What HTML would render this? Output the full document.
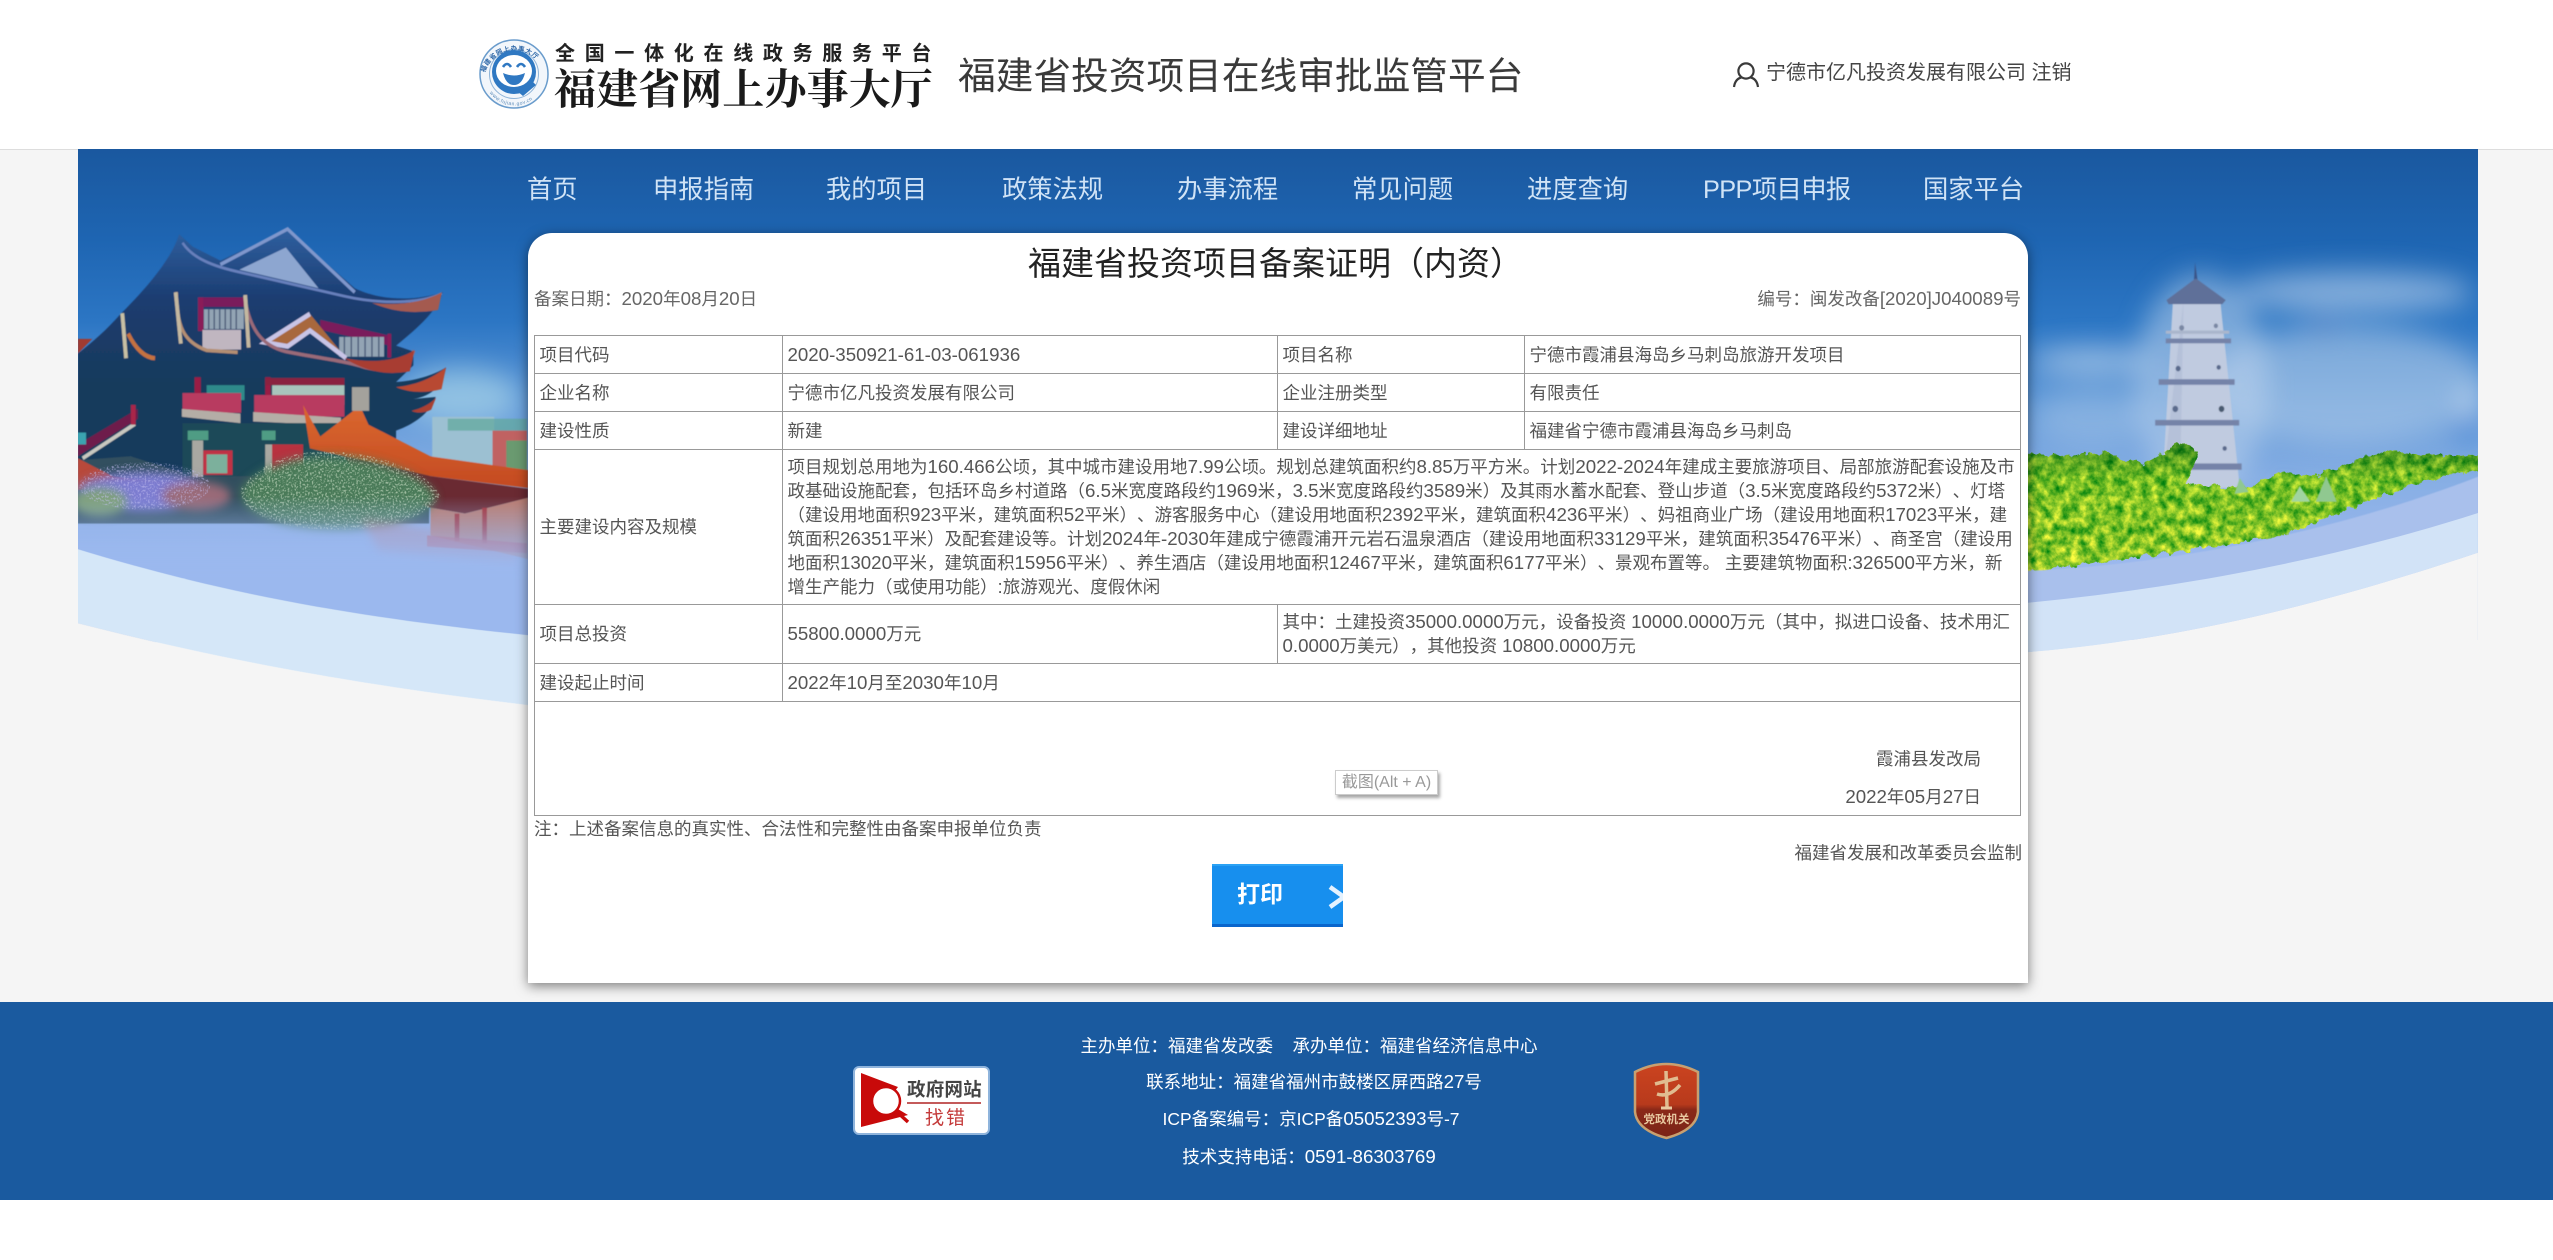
<!DOCTYPE html>
<html lang="zh-CN"><head><meta charset="utf-8"><title>福建省投资项目在线审批监管平台</title>
<style>
html,body{margin:0;padding:0;background:#fff}
body{position:relative;width:2553px;height:1260px;overflow:hidden;font-family:"Liberation Sans","Noto Sans CJK SC",sans-serif;color:#555;font-size:17.5px;text-spacing-trim:space-all}
.t{position:absolute;white-space:nowrap}
i{font-style:normal;font-size:18.7px}
#head{position:absolute;left:0;top:0;width:2553px;height:149px;background:#fff;border-bottom:1px solid #ddd}
#main{position:absolute;left:0;top:150px;width:2553px;height:852px;background:#f5f5f5}
#art{position:absolute;left:0;top:0}
.n{font-size:25.3px;line-height:36px;top:172px;color:#d0e3f6}
#card{position:absolute;left:528px;top:233px;width:1500px;height:750px;background:#fff;border-radius:24px 24px 0 0;box-shadow:0 3px 12px rgba(0,0,0,.5)}
table{position:absolute;left:534px;top:335px;width:1486px;height:481px;table-layout:fixed;border-collapse:collapse;color:#555;font-size:17.5px;line-height:24px}
td{border:1px solid #999;padding:0 4.5px;vertical-align:middle;white-space:nowrap}
#foot{position:absolute;left:0;top:1002px;width:2553px;height:198px;background:#1a5a9f}
.f{color:#fff;font-size:17.5px;line-height:30px;text-align:center;left:909px;width:800px}
#btn{position:absolute;left:1212px;top:864px;width:131px;height:63px;background:#178fee;border-top:2px solid #2ba2f4;border-bottom:3px solid #0a66cc;box-sizing:border-box;overflow:hidden;color:#fff;font-weight:bold;font-size:23px}
#tip{position:absolute;left:1335px;top:770px;width:103px;height:25px;box-sizing:border-box;background:#fff;border:1px solid #ccc;box-shadow:2px 3px 3px rgba(0,0,0,.35);color:#999;font-size:16px;line-height:23px;text-align:center;white-space:nowrap}
</style></head><body>
<div id="head"></div>
<div id="main"></div>
<svg id="art" width="2553" height="1260" viewBox="0 0 2553 1260" xmlns="http://www.w3.org/2000/svg">
<defs>
<linearGradient id="sky" x1="0" y1="149" x2="0" y2="560" gradientUnits="userSpaceOnUse">
<stop offset="0" stop-color="#1a589f"/><stop offset=".22" stop-color="#1e65b2"/><stop offset=".42" stop-color="#2c76c4"/><stop offset=".62" stop-color="#5f98d8"/><stop offset=".8" stop-color="#86aee4"/><stop offset="1" stop-color="#9bb8ee"/>
</linearGradient>
<linearGradient id="mass" x1="0" y1="230" x2="0" y2="620" gradientUnits="userSpaceOnUse">
<stop offset="0" stop-color="#2f5f9f"/><stop offset=".45" stop-color="#1b3c70"/><stop offset="1" stop-color="#193a5c"/>
</linearGradient>
<linearGradient id="fade" x1="0" y1="900" x2="0" y2="1110" gradientUnits="userSpaceOnUse">
<stop offset="0" stop-color="#9bb8ee" stop-opacity="0"/><stop offset=".5" stop-color="#9bb8ee" stop-opacity=".6"/><stop offset="1" stop-color="#9bb8ee"/>
</linearGradient>
<linearGradient id="tree" x1="0" y1="780" x2="0" y2="1060" gradientUnits="userSpaceOnUse">
<stop offset="0" stop-color="#86c0a0"/><stop offset=".28" stop-color="#dcf6c0"/><stop offset="1" stop-color="#ffffd0"/>
</linearGradient>
<linearGradient id="rf" x1="0" y1="690" x2="0" y2="880" gradientUnits="userSpaceOnUse">
<stop offset="0" stop-color="#d8652e"/><stop offset="1" stop-color="#c44a22"/>
</linearGradient>
<linearGradient id="sh" x1="0" y1="1062" x2="0" y2="1139" gradientUnits="userSpaceOnUse">
<stop offset="0" stop-color="#cc4420"/><stop offset=".55" stop-color="#b83a1c"/><stop offset=".62" stop-color="#8a2818"/><stop offset="1" stop-color="#7a2418"/>
</linearGradient>
<filter id="b12" x="-60%" y="-60%" width="220%" height="220%"><feGaussianBlur stdDeviation="36"/></filter>
<filter id="b8" x="-20%" y="-20%" width="140%" height="140%"><feGaussianBlur stdDeviation="12"/></filter>
<filter id="b1"><feGaussianBlur stdDeviation="1.4"/></filter>
<filter id="leaf" x="-5%" y="-5%" width="110%" height="110%" color-interpolation-filters="sRGB">
<feTurbulence type="fractalNoise" baseFrequency=".04" numOctaves="4" seed="7" result="n"/>
<feDisplacementMap in="SourceGraphic" in2="n" scale="26" xChannelSelector="R" yChannelSelector="G" result="d"/>
<feColorMatrix in="n" type="matrix" values="1.5 0 0 0 -.22  .7 0 0 0 .42  .35 0 0 0 .02  0 0 0 0 1" result="c"/>
<feBlend in="c" in2="d" mode="multiply" result="m"/>
<feComposite in="m" in2="d" operator="in"/>
</filter>
<filter id="spk" x="-5%" y="-5%" width="110%" height="110%" color-interpolation-filters="sRGB">
<feTurbulence type="fractalNoise" baseFrequency=".2" numOctaves="2" seed="11" result="n"/>
<feColorMatrix in="n" type="matrix" values="0 0 0 0 1  0 0 0 0 1  0 0 0 0 1  6 0 0 0 -3.1" result="k"/>
<feComposite in="SourceGraphic" in2="k" operator="in"/>
</filter>
<clipPath id="heroL"><rect x="226" y="0" width="1320" height="1568"/></clipPath>
<clipPath id="heroR"><rect x="60" y="0" width="1295" height="1568"/></clipPath>
<path id="ringT" d="M484,76 A31,31 0 0 1 545,76"/>
<path id="ringB" d="M489,92 A31,31 0 0 0 540,92"/>
</defs>

<!-- hero sky -->
<rect x="78" y="149" width="2400" height="420" fill="url(#sky)"/>
<rect x="78" y="560" width="2400" height="80" fill="#9bb8ee"/>

<!-- LEFT SCENE -->
<g transform="translate(0,140) scale(.3444,.3954)" clip-path="url(#heroL)">
 <g filter="url(#b12)"><ellipse cx="1340" cy="650" rx="170" ry="70" fill="#a8d4e8" opacity=".7"/></g>
 <g filter="url(#b1)">
 <!-- distant building -->
 <rect x="1255" y="700" width="180" height="130" fill="#9cc0d2"/>
 <rect x="1300" y="705" width="230" height="30" fill="#5fa89a" opacity=".7"/>
 <rect x="1430" y="735" width="100" height="100" fill="#c06262"/>
 <rect x="1470" y="760" width="60" height="80" fill="#6a9a70"/>
 <!-- main silhouette -->
 <rect x="226" y="800" width="1020" height="170" fill="#33505e"/>
 <path d="M520,238 L560,270 L640,305 L835,225 L1030,375 C1100,405 1200,410 1285,385 C1270,430 1220,470 1150,520 L1200,535 L1200,570 L1150,612 C1200,610 1260,595 1295,575 C1285,630 1240,650 1200,655 L1265,650 C1250,690 1200,720 1150,735 L1150,850 L560,850 L380,800 L226,810 L226,540 C270,510 310,480 350,440 C420,380 500,300 520,238Z" fill="url(#mass)"/>
 <!-- gable -->
 <path d="M640,315 L835,225 L1030,385" fill="none" stroke="#7f97cc" stroke-width="9"/>
 <path d="M830,272 L695,328 L925,375Z" fill="#8da6d0"/>
 <path d="M530,260 C560,300 620,320 700,335 L1000,395 C1100,415 1220,415 1283,388" fill="none" stroke="#6880bc" stroke-width="7"/>
 <path d="M1080,412 C1160,420 1230,410 1283,385 L1272,430 C1200,440 1140,435 1080,412Z" fill="#a45a50"/>
 <!-- second level -->
 <rect x="575" y="398" width="16" height="85" fill="#8a1a58"/>
 <rect x="590" y="398" width="125" height="24" fill="#7a1c5c"/>
 <rect x="592" y="428" width="116" height="50" fill="#93a4b4"/>
 <path d="M606,428v50M622,428v50M638,428v50M654,428v50M670,428v50M686,428v50" stroke="#4a5a78" stroke-width="4"/>
 <rect x="588" y="480" width="112" height="50" fill="#c0b6c0"/>
 <path d="M930,455 L1132,495 L1132,520 L930,480Z" fill="#7a1c5c"/>
 <rect x="985" y="498" width="130" height="50" fill="#93a4b4"/>
 <path d="M1000,498v50M1020,498v50M1040,498v50M1060,498v50M1080,498v50M1100,498v50" stroke="#4a5a78" stroke-width="4"/>
 <rect x="1125" y="490" width="11" height="60" fill="#8a1a58"/>
 <path d="M900,440 L770,512 L835,522 L900,482 L1005,552" fill="#a8683c" stroke="#c8c4e6" stroke-width="12"/>
 <path d="M512,385 C515,470 530,510 600,532 L690,537" fill="none" stroke="#b48e72" stroke-width="9"/>
 <path d="M710,395 C725,480 760,520 830,535 C900,548 1000,558 1060,575 C1130,590 1190,570 1202,532" fill="none" stroke="#9a6a78" stroke-width="9"/>
 <path d="M1000,552 C1080,565 1150,560 1203,532 L1190,585 C1120,596 1060,585 1000,552Z" fill="#a83c30"/>
 <path d="M510,385 L525,515 M712,392 L722,525" stroke="#c4b8a0" stroke-width="11" fill="none"/>
 <path d="M355,438 L366,552" stroke="#c8c0a4" stroke-width="11"/>
 <path d="M372,490 C395,530 420,550 450,552" fill="none" stroke="#c47240" stroke-width="11"/>
 <path d="M1150,625 C1210,620 1260,600 1295,575 L1282,630 C1240,640 1190,640 1150,625Z" fill="#b84a30"/>
 <path d="M1195,685 C1220,680 1250,668 1266,652 L1252,682 C1235,690 1210,692 1195,685Z" fill="#a84030"/>
 <path d="M226,503 L268,503 L226,540Z" fill="#a03a30"/>
 <!-- balcony -->
 <rect x="565" y="600" width="18" height="42" fill="#9a1a44"/>
 <rect x="770" y="600" width="16" height="48" fill="#9a1a44"/>
 <rect x="600" y="620" width="110" height="38" fill="#2d8a8a"/>
 <rect x="790" y="620" width="210" height="50" fill="#a8c4bc"/>
 <rect x="770" y="602" width="230" height="18" fill="#8a2040"/>
 <rect x="530" y="640" width="170" height="50" fill="#b83a60"/>
 <rect x="738" y="645" width="262" height="55" fill="#b83a60"/>
 <path d="M528,680 L698,692 L698,716 L528,700Z" fill="#b4ada6"/>
 <path d="M735,688 L990,702 L990,722 L735,712Z" fill="#b4ada6"/>
 <!-- lower -->
 <rect x="530" y="716" width="510" height="134" fill="#1d4858"/>
 <rect x="558" y="760" width="32" height="92" fill="#a8a8a2"/>
 <rect x="770" y="770" width="22" height="82" fill="#a8a8a2"/>
 <rect x="590" y="785" width="85" height="62" fill="#c03244"/>
 <rect x="600" y="795" width="60" height="48" fill="#7cb09c"/>
 <rect x="790" y="770" width="90" height="75" fill="#b83040"/>
 <rect x="545" y="735" width="60" height="24" fill="#4f9c84"/>
 <rect x="760" y="735" width="40" height="24" fill="#4f9c84"/>
 <path d="M226,770 L400,680 L400,705 L226,800Z" fill="#6e1a4c"/>
 <path d="M240,805 L392,718" stroke="#c8c8c0" stroke-width="10"/>
 <rect x="380" y="670" width="14" height="50" fill="#a82848"/>
 <rect x="226" y="740" width="24" height="30" fill="#3aa4b0"/>
 <!-- red roof right -->
 <path d="M1045,672 L1070,720 L1250,800 L1533,835 L1533,880 L1250,850 L1000,800 L900,780 L880,670 L930,750Z" fill="url(#rf)"/>
 <rect x="1022" y="625" width="50" height="60" fill="#a4a29c"/>
 <path d="M1000,800 L1250,850 L1533,882 L1533,905 L1350,945 L1250,930 L1050,870Z" fill="#6a2a30"/>
 <path d="M1250,930 L1350,945 L1533,905 L1533,1060 L1250,1000Z" fill="#bc7c6e"/>
 <rect x="1320" y="945" width="14" height="70" fill="#a82e30"/>
 <rect x="1400" y="930" width="14" height="90" fill="#a82e30"/>
 <path d="M1240,1000 L1530,1020 L1530,1045 L1240,1028Z" fill="#c03c4c" opacity=".7"/>
 <path d="M226,805 L330,852 L540,872 L226,885Z" fill="#b84a3a"/>
 </g>
 <!-- foliage -->
 <g filter="url(#b8)">
 <ellipse cx="420" cy="890" rx="200" ry="50" fill="#7c7cd0"/>
 <ellipse cx="290" cy="915" rx="80" ry="36" fill="#7fa07a"/>
 <path d="M700,880 C770,815 880,790 1000,800 C1120,810 1240,850 1270,905 C1230,965 1100,990 950,985 C800,980 690,945 700,880Z" fill="#4a7a58"/>
 <ellipse cx="570" cy="900" rx="100" ry="36" fill="#9a6a78"/>
 <path d="M1050,960 L1500,1020 L1500,1070 L1100,1040Z" fill="#d8706e" opacity=".4"/>
 </g>
 <g filter="url(#spk)" opacity=".55">
 <ellipse cx="420" cy="875" rx="190" ry="60" fill="#c6c2f2"/>
 <path d="M700,880 C770,800 880,780 1000,790 C1120,800 1250,840 1280,900 C1230,965 1100,990 950,985 C800,980 690,945 700,880Z" fill="#e4f2da"/>
 </g>
 <!-- fade -->
 <rect x="226" y="900" width="1320" height="370" fill="url(#fade)"/>
 <!-- bands -->
 <path d="M226,1035 C620,1140 1000,1205 1540,1253 L1540,1430 C1000,1375 600,1305 226,1222Z" fill="#d5e7f8"/>
 <path d="M226,1222 C600,1305 1000,1375 1540,1430 L1540,1568 L226,1568Z" fill="#f5f5f5"/>
</g>

<!-- RIGHT SCENE -->
<g transform="translate(2000,140) scale(.3527,.3954)" clip-path="url(#heroR)">
 <g filter="url(#b12)">
  <ellipse cx="1000" cy="385" rx="340" ry="50" fill="#c4d8f0" opacity=".6"/>
  <ellipse cx="980" cy="620" rx="400" ry="150" fill="#b4cdea" opacity=".55"/>
  <ellipse cx="260" cy="560" rx="170" ry="28" fill="#cfe0f2" opacity=".7"/>
  <ellipse cx="260" cy="700" rx="170" ry="70" fill="#c0d6ee" opacity=".35"/>
  <ellipse cx="570" cy="620" rx="190" ry="280" fill="#c4d8ee" opacity=".5"/>
  <ellipse cx="920" cy="470" rx="50" ry="16" fill="#2c76c4" opacity=".9"/>
  <ellipse cx="1320" cy="730" rx="50" ry="16" fill="#2a80d4" opacity="1"/>
  <ellipse cx="1330" cy="665" rx="30" ry="26" fill="#d8e6f4" opacity=".9"/>
 </g>
 <g filter="url(#b1)">
 <path d="M553,310 L560,355 L550,355Z" fill="#3a5488"/>
 <path d="M490,410 L625,410 L680,880 L460,880Z" fill="#c0cbe0"/>
 <path d="M520,410 L460,880 L510,880Z" fill="#aebad4" opacity=".6"/>
 <path d="M555,350 L640,405 L630,415 L478,415 L472,405Z" fill="#5f7099"/>
 <rect x="470" y="482" width="180" height="8" fill="#aab6cc"/>
 <rect x="470" y="502" width="185" height="12" fill="#7483a8"/>
 <rect x="450" y="605" width="215" height="14" fill="#7483a8"/>
 <rect x="440" y="708" width="238" height="14" fill="#7483a8"/>
 <rect x="530" y="818" width="155" height="16" fill="#7483a8"/>
 <circle cx="505" cy="578" r="7" fill="#5a6a8c"/><circle cx="620" cy="575" r="6" fill="#5a6a8c"/>
 <circle cx="497" cy="680" r="8" fill="#5a6a8c"/><circle cx="628" cy="680" r="8" fill="#4a5a70"/>
 <circle cx="515" cy="475" r="7" fill="#7a88a4"/><circle cx="612" cy="470" r="6" fill="#7a88a4"/>
 <circle cx="637" cy="780" r="6" fill="#5a6a8c"/>
 </g>
 <!-- trees -->
 <path d="M60,790 L200,800 L300,790 L400,820 L470,790 L510,760 L560,790 L530,870 L700,880 L800,840 L900,850 L1000,810 L1100,790 L1250,795 L1370,800 L1370,830 L1200,860 L1000,930 L800,1000 L600,1030 L300,1065 L60,1095Z" fill="url(#tree)" filter="url(#leaf)"/>
 <g filter="url(#b1)">
 <path d="M680,855 L705,890 L665,895Z" fill="#90c890"/><path d="M850,875 L880,915 L825,915Z" fill="#a0d4a0"/><path d="M925,850 L955,915 L895,915Z" fill="#90c890"/>
 </g>
 <!-- bands -->
 <path d="M60,1090 C400,1080 900,1010 1360,850 L1360,945 C1000,1060 600,1120 60,1175Z" fill="#a9c0ec" filter="url(#b1)"/>
 <path d="M60,1172 C500,1135 950,1060 1360,942 L1360,1042 C900,1180 500,1265 60,1297Z" fill="#d2e3f7"/>
 <path d="M60,1297 C500,1265 900,1180 1360,1042 L1360,1568 L60,1568Z" fill="#f5f5f5"/>
</g>
<rect x="2478" y="150" width="75" height="640" fill="#f5f5f5"/>
<rect x="0" y="150" width="78" height="640" fill="#f5f5f5"/>

<!-- logo -->
<circle cx="514" cy="74" r="34" fill="#f2f6fb" stroke="#6a9ccc" stroke-width="1.5"/>
<circle cx="514" cy="74" r="24.5" fill="none" stroke="#8fb4d8" stroke-width="1"/>
<text font-size="6.5" fill="#2f68a8" font-weight="bold" letter-spacing=".6"><textPath href="#ringT" startOffset="4%">福建省网上办事大厅</textPath></text>
<text font-size="5" fill="#5a8ab8" letter-spacing=".5"><textPath href="#ringB" startOffset="2%">www.fujian.gov.cn</textPath></text>
<circle cx="514" cy="72" r="22" fill="#2f78c2"/>
<ellipse cx="514" cy="71" rx="18" ry="16" fill="#fff"/>
<path d="M503,67 q4,-6 8,0 M517,67 q4,-6 8,0" fill="none" stroke="#2f78c2" stroke-width="2.6"/>
<path d="M503,73 Q514,78 525,73 Q522,85 514,85 Q506,85 503,73Z" fill="#2f78c2"/>
<path d="M517,91 L532,81 L536,85 L523,96Z" fill="#2f78c2"/>

<!-- user icon -->
<g fill="none" stroke="#3a3a3a" stroke-width="2.2"><circle cx="1746" cy="71" r="7.6"/><path d="M1734,87 C1735,80 1739,78 1741.5,77.5 M1758,87 C1757,80 1753,78 1750.5,77.5"/></g>
</svg>

<div class="t" style="left:555px;top:39px;font-size:20px;line-height:30px;font-weight:bold;letter-spacing:9.7px;color:#222">全国一体化在线政务服务平台</div>
<div class="t" style="left:554px;top:62px;font-family:'Noto Serif CJK SC',serif;font-size:42px;line-height:50px;font-weight:700;letter-spacing:.1px;color:#1a1a1a">福建省网上办事大厅</div>
<div class="t" style="left:958px;top:51px;font-size:37.7px;line-height:50px;color:#3a3a3a">福建省投资项目在线审批监管平台</div>
<div class="t" style="left:1766px;top:58px;font-size:20px;line-height:30px;color:#444">宁德市亿凡投资发展有限公司 注销</div>

<div class="t n" style="left:527px">首页</div>
<div class="t n" style="left:653px">申报指南</div>
<div class="t n" style="left:826px">我的项目</div>
<div class="t n" style="left:1002px">政策法规</div>
<div class="t n" style="left:1177px">办事流程</div>
<div class="t n" style="left:1352px">常见问题</div>
<div class="t n" style="left:1527px">进度查询</div>
<div class="t n" style="left:1703px;letter-spacing:-.6px">PPP项目申报</div>
<div class="t n" style="left:1923px">国家平台</div>

<div id="card"></div>
<div class="t" style="left:1028px;top:242px;font-size:33px;line-height:44px;color:#222">福建省投资项目备案证明（内资）</div>
<div class="t" style="left:534px;top:287px;line-height:24px;color:#666">备案日期：<i>2020</i>年<i>08</i>月<i>20</i>日</div>
<div class="t" style="right:532px;top:287px;line-height:24px;color:#666">编号：闽发改备<i>[2020]J040089</i>号</div>

<table>
<colgroup><col style="width:248px"><col style="width:495px"><col style="width:247px"><col style="width:496px"></colgroup>
<tr style="height:38px"><td>项目代码</td><td><i>2020-350921-61-03-061936</i></td><td>项目名称</td><td>宁德市霞浦县海岛乡马刺岛旅游开发项目</td></tr>
<tr style="height:38px"><td>企业名称</td><td>宁德市亿凡投资发展有限公司</td><td>企业注册类型</td><td>有限责任</td></tr>
<tr style="height:38px"><td>建设性质</td><td>新建</td><td>建设详细地址</td><td>福建省宁德市霞浦县海岛乡马刺岛</td></tr>
<tr style="height:155px"><td>主要建设内容及规模</td><td colspan="3">项目规划总用地为<i>160.466</i>公顷，其中城市建设用地<i>7.99</i>公顷。规划总建筑面积约<i>8.85</i>万平方米。计划<i>2022-2024</i>年建成主要旅游项目、局部旅游配套设施及市<br>政基础设施配套，包括环岛乡村道路（<i>6.5</i>米宽度路段约<i>1969</i>米，<i>3.5</i>米宽度路段约<i>3589</i>米）及其雨水蓄水配套、登山步道（<i>3.5</i>米宽度路段约<i>5372</i>米）、灯塔<br>（建设用地面积<i>923</i>平米，建筑面积<i>52</i>平米）、游客服务中心（建设用地面积<i>2392</i>平米，建筑面积<i>4236</i>平米）、妈祖商业广场（建设用地面积<i>17023</i>平米，建<br>筑面积<i>26351</i>平米）及配套建设等。计划<i>2024</i>年<i>-2030</i>年建成宁德霞浦开元岩石温泉酒店（建设用地面积<i>33129</i>平米，建筑面积<i>35476</i>平米）、商圣宫（建设用<br>地面积<i>13020</i>平米，建筑面积<i>15956</i>平米）、养生酒店（建设用地面积<i>12467</i>平米，建筑面积<i>6177</i>平米）、景观布置等。 主要建筑物面积<i>:326500</i>平方米，新<br>增生产能力（或使用功能）<i>:</i>旅游观光、度假休闲</td></tr>
<tr style="height:59px"><td>项目总投资</td><td><i>55800.0000</i>万元</td><td colspan="2">其中：土建投资<i>35000.0000</i>万元，设备投资 <i>10000.0000</i>万元（其中，拟进口设备、技术用汇<br><i>0.0000</i>万美元），其他投资 <i>10800.0000</i>万元</td></tr>
<tr style="height:38px"><td>建设起止时间</td><td colspan="3"><i>2022</i>年<i>10</i>月至<i>2030</i>年<i>10</i>月</td></tr>
<tr style="height:114px"><td colspan="4"></td></tr>
</table>
<div class="t" style="right:572px;top:747px;line-height:24px">霞浦县发改局</div>
<div class="t" style="right:572px;top:785px;line-height:24px"><i>2022</i>年<i>05</i>月<i>27</i>日</div>
<div id="tip">截图(Alt + A)</div>
<div class="t" style="left:534px;top:817px;line-height:24px">注：上述备案信息的真实性、合法性和完整性由备案申报单位负责</div>
<div class="t" style="right:531px;top:841px;line-height:24px">福建省发展和改革委员会监制</div>
<div id="btn"><span class="t" style="left:25px;top:11px;line-height:34px">打印</span>
<svg style="position:absolute;left:116px;top:19px" width="15" height="24"><path d="M2,2 L16,12 L2,22" fill="none" stroke="#e4f2ff" stroke-width="4.5"/></svg></div>

<div id="foot"></div>
<div class="t f" style="top:1031px">主办单位：福建省发改委&nbsp;&nbsp;&nbsp;&nbsp;承办单位：福建省经济信息中心</div>
<div class="t f" style="top:1067px;left:914px">联系地址：福建省福州市鼓楼区屏西路<i>27</i>号</div>
<div class="t f" style="top:1104px;left:911px">ICP备案编号：京ICP备<i>05052393</i>号-7</div>
<div class="t f" style="top:1142px">技术支持电话：<i>0591-86303769</i></div>

<svg style="position:absolute;left:0;top:0" width="2553" height="1260" viewBox="0 0 2553 1260">
<rect x="854" y="1067" width="135" height="67" rx="5" fill="#fff" stroke="#8fb4dc" stroke-width="2"/>
<path d="M861,1073 L898,1087 L886,1102 L908,1115 L861,1127Z" fill="#c80a0a"/>
<circle cx="886" cy="1101" r="14" fill="#fff" stroke="#c80a0a" stroke-width="2.5"/>
<path d="M896,1111 L908,1122" stroke="#c80a0a" stroke-width="3.5"/>
<text x="907" y="1096" font-size="18.5" font-weight="bold" fill="#444" letter-spacing=".2" font-family="'Liberation Sans','Noto Sans CJK SC',sans-serif">政府网站</text>
<rect x="907" y="1102" width="74" height="2" fill="#c45a5a"/>
<text x="925" y="1124" font-size="19" letter-spacing="2" fill="#c43a3a" font-family="'Liberation Sans','Noto Sans CJK SC',sans-serif">找错</text>
<path d="M1635,1072 Q1666,1056 1698,1072 L1698,1112 Q1696,1130 1666.5,1138 Q1637,1130 1635,1112Z" fill="url(#sh)" stroke="#c8a070" stroke-width="2.5"/>
<path d="M1666,1071 L1667,1107 M1655,1084 L1678,1078 M1657,1094 Q1669,1098 1680,1085" fill="none" stroke="#e0bc90" stroke-width="3.5"/>
<path d="M1661,1108 L1672,1108" stroke="#e8c8a0" stroke-width="3"/>
<text x="1666.5" y="1123" text-anchor="middle" font-size="11.5" font-weight="bold" fill="#e8c8a0" font-family="'Liberation Sans','Noto Sans CJK SC',sans-serif">党政机关</text>
</svg>
</body></html>
